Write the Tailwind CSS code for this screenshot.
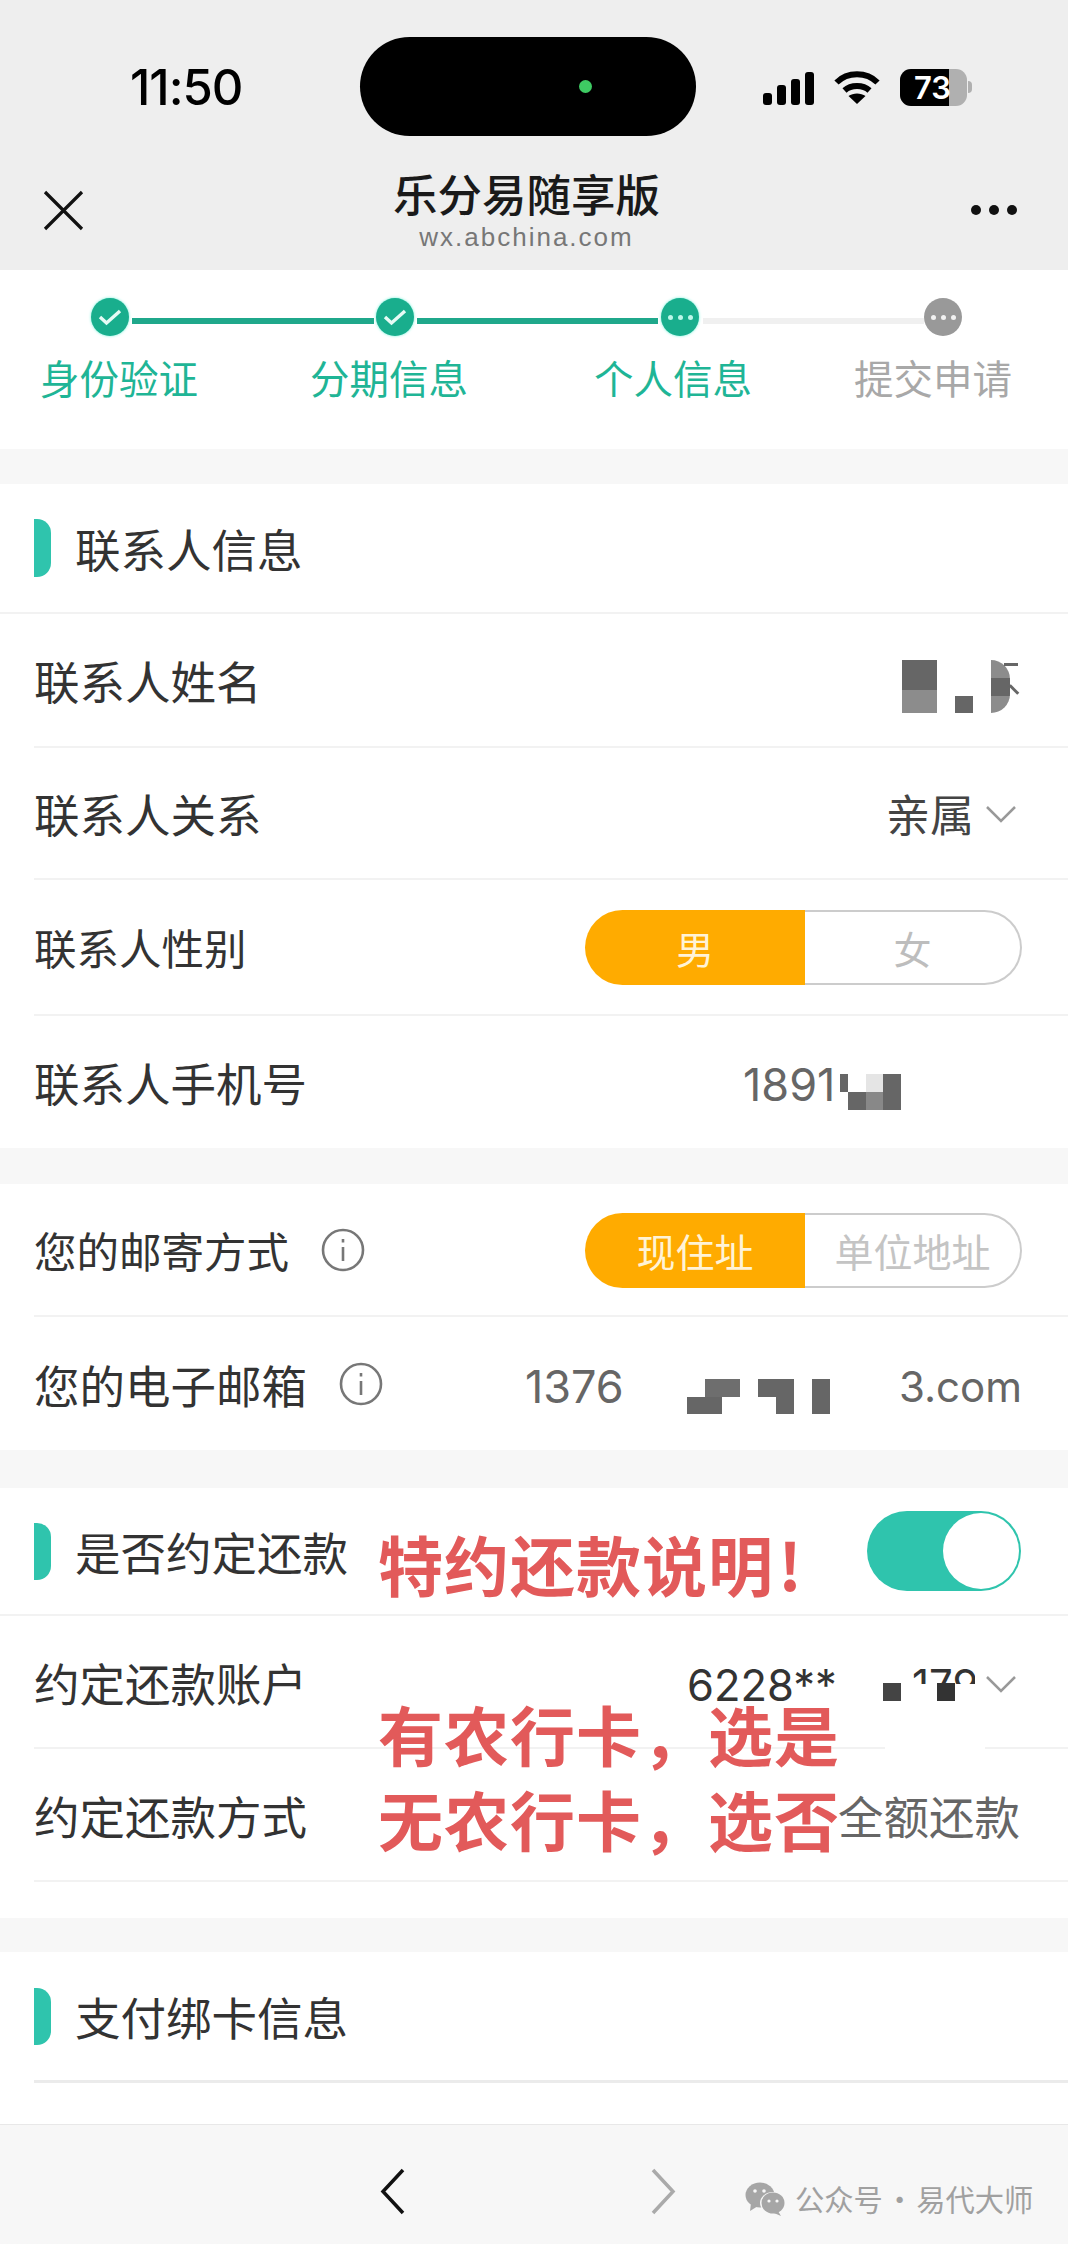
<!DOCTYPE html>
<html lang="zh-CN">
<head>
    <meta charset="UTF-8">
    <meta name="viewport" content="width=device-width, initial-scale=1.0">
    <title>乐分易随享版</title>
    <script src="https://cdn.jsdelivr.net/npm/@tailwindcss/browser@4"></script>
</head>
<body class="bg-[#f7f7f7]">
<div class="relative w-[1068px] h-[2244px] overflow-hidden bg-[#f7f7f7] text-[#333] font-['Noto_Sans_CJK_SC',sans-serif]">

    <!-- status bar + title bar -->
    <header class="h-[270px] bg-[#eeeeee] flex flex-col">
        <div class="grid grid-cols-[360px_336px_1fr] pt-[37px]">
            <div class="pl-[130px] pt-[21px] text-[49px] leading-[60px] font-medium text-black font-['Inter',sans-serif] tracking-[-1px]">11:50</div>
            <div class="h-[99px] rounded-full bg-black flex items-center pl-[219px]">
                <span class="w-[13px] h-[13px] rounded-full bg-[#3ecb63]"></span>
            </div>
            <div class="flex items-center pl-[67px] pt-[1px]">
                <div class="flex items-end gap-[5px] h-[34px] mt-[2px]">
                    <span class="w-[9px] h-[12px] rounded-[3px] bg-black"></span>
                    <span class="w-[9px] h-[20px] rounded-[3px] bg-black"></span>
                    <span class="w-[9px] h-[26px] rounded-[3px] bg-black"></span>
                    <span class="w-[9px] h-[33px] rounded-[3px] bg-black"></span>
                </div>
                <svg class="ml-[20px]" width="46" height="34" viewBox="0 0 46 34" fill="none">
                    <path d="M2.5 12.5C13.5 1.5 32.5 1.5 43.5 12.5" stroke="#000" stroke-width="6"/>
                    <path d="M10.5 20.5C17 14.5 29 14.5 35.5 20.5" stroke="#000" stroke-width="6"/>
                    <path d="M23 34L14.5 26C19 22.5 27 22.5 31.5 26Z" fill="#000"/>
                </svg>
                <div class="ml-[20px] relative w-[67px] h-[37px] rounded-[11px] overflow-hidden bg-[#b0b0b0] shrink-0">
                    <div class="w-[49px] h-full bg-black"></div>
                    <span class="absolute left-[14px] top-0 text-[31px] leading-[37px] font-semibold text-white font-['Inter',sans-serif]">73</span>
                </div>
                <span class="ml-[1px] w-[4px] h-[12px] rounded-r-full bg-[#b0b0b0]"></span>
            </div>
        </div>
        <div class="flex items-start pt-[31px]">
            <svg class="ml-[43px] mt-[23px]" width="41" height="41" viewBox="0 0 41 41" fill="none" stroke="#111" stroke-width="3.2">
                <path d="M2 2L39 39M39 2L2 39"/>
            </svg>
            <div class="flex-1 flex flex-col items-center ml-[-2px]">
                <div class="text-[44.5px] leading-[52px] font-medium text-[#1a1a1a]">乐分易随享版</div>
                <div class="mt-[3px] text-[26px] leading-[30px] tracking-[2px] text-[#777] font-['Liberation_Sans',sans-serif]">wx.abchina.com</div>
            </div>
            <div class="flex gap-[8px] mr-[51px] mt-[38px]">
                <span class="w-[10px] h-[10px] rounded-full bg-[#111]"></span>
                <span class="w-[10px] h-[10px] rounded-full bg-[#111]"></span>
                <span class="w-[10px] h-[10px] rounded-full bg-[#111]"></span>
            </div>
        </div>
    </header>

    <!-- steps -->
    <section class="h-[179px] bg-white">
        <div class="flex items-center pl-[91px] pt-[28px]">
            <span class="w-[38px] h-[38px] rounded-full bg-[#19ae8d] shadow-[0_0_3px_#6ff0d8] flex items-center justify-center shrink-0">
                <svg width="24" height="18" viewBox="0 0 24 18" fill="none" stroke="#e6fbf5" stroke-width="3.4"><path d="M2 9l6.5 6L22 3"/></svg>
            </span>
            <span class="ml-[3px] mt-[8px] w-[242px] h-[6px] bg-[#1fa88b]"></span>
            <span class="ml-[2px] w-[38px] h-[38px] rounded-full bg-[#19ae8d] shadow-[0_0_3px_#6ff0d8] flex items-center justify-center shrink-0">
                <svg width="24" height="18" viewBox="0 0 24 18" fill="none" stroke="#e6fbf5" stroke-width="3.4"><path d="M2 9l6.5 6L22 3"/></svg>
            </span>
            <span class="ml-[3px] mt-[8px] w-[241px] h-[6px] bg-[#1fa88b]"></span>
            <span class="ml-[3px] w-[38px] h-[38px] rounded-full bg-[#19ae8d] shadow-[0_0_3px_#6ff0d8] flex items-center justify-center gap-[5px] shrink-0">
                <i class="w-[5px] h-[5px] rounded-full bg-[#bdf7ea]"></i><i class="w-[5px] h-[5px] rounded-full bg-[#bdf7ea]"></i><i class="w-[5px] h-[5px] rounded-full bg-[#bdf7ea]"></i>
            </span>
            <span class="ml-[4px] mt-[8px] w-[221px] h-[6px] bg-[#f0f0f0]"></span>
            <span class="w-[38px] h-[38px] rounded-full bg-[#999999] flex items-center justify-center gap-[5px] shrink-0">
                <i class="w-[5px] h-[5px] rounded-full bg-[#f2f2f2]"></i><i class="w-[5px] h-[5px] rounded-full bg-[#f2f2f2]"></i><i class="w-[5px] h-[5px] rounded-full bg-[#f2f2f2]"></i>
            </span>
        </div>
        <div class="flex pl-[40px] pt-[16px] text-[39.5px] leading-[50px] text-[#1fb596]">
            <span class="w-[160px]">身份验证</span>
            <span class="ml-[110px] w-[160px]">分期信息</span>
            <span class="ml-[124px] w-[160px]">个人信息</span>
            <span class="ml-[100px] w-[160px] text-[#a8a8a8]">提交申请</span>
        </div>
    </section>

    <!-- 联系人信息 -->
    <section class="mt-[35px] bg-white text-[45.5px] leading-[60px]">
        <div class="h-[130px] border-b-2 border-[#f2f2f2] flex items-center pl-[34px]">
            <span class="w-[17px] h-[58px] rounded-r-[14px] bg-[#2fc4ad]"></span>
            <span class="ml-[24px]">联系人信息</span>
        </div>
        <div class="ml-[34px] h-[134px] border-b-2 border-[#f2f2f2] flex items-center justify-between">
            <span>联系人姓名</span>
            <div class="relative w-[110px] h-[53px] mr-[56px] mt-[13px]">
                <span class="absolute left-0 top-0 w-[35px] h-[30px] bg-[#666]"></span>
                <span class="absolute left-0 top-[30px] w-[35px] h-[23px] bg-[#8c8c8c]"></span>
                <span class="absolute left-[53px] top-[36px] w-[18px] h-[17px] bg-[#666]"></span>
                <div class="absolute left-[89px] top-0 w-[19px] h-[53px] rounded-r-full overflow-hidden bg-[#8c8c8c]">
                    <div class="mt-[18px] h-[18px] bg-[#666]"></div>
                </div>
                <span class="absolute left-[102px] top-[3px] w-[14px] h-[3px] bg-[#666]"></span>
                <span class="absolute left-[106px] top-[28px] w-[12px] h-[3px] rotate-45 bg-[#666]"></span>
            </div>
        </div>
        <div class="ml-[34px] h-[132px] border-b-2 border-[#f2f2f2] flex items-center justify-between">
            <span>联系人关系</span>
            <div class="flex items-center pr-[52px] text-[#444] text-[44px]">
                <span>亲属</span>
                <svg class="ml-[12px] mt-[3px]" width="30" height="17" viewBox="0 0 30 17" fill="none" stroke="#999" stroke-width="2.5"><path d="M1 1L15 15L29 1"/></svg>
            </div>
        </div>
        <div class="ml-[34px] h-[136px] border-b-2 border-[#f2f2f2] flex items-center justify-between">
            <span class="text-[42.5px]">联系人性别</span>
            <div class="flex w-[437px] h-[75px] mr-[46px] mt-[1px] text-[38px] leading-none">
                <span class="w-[220px] rounded-l-full bg-[#ffab00] text-[#fff3d6] flex items-center justify-center">男</span>
                <span class="flex-1 rounded-r-full border-2 border-l-0 border-[#cccccc] text-[#bdbdbd] flex items-center justify-center">女</span>
            </div>
        </div>
        <div class="ml-[34px] h-[132px] flex items-center justify-between">
            <span>联系人手机号</span>
            <div class="relative w-[158px] h-[60px] mr-[167px] mt-[6px] text-[45px] leading-[60px] text-[#666] font-['Inter',sans-serif]">
                1891
                <span class="absolute left-[97px] top-[19px] w-[8px] h-[18px] bg-[#666]"></span>
                <span class="absolute left-[105px] top-[37px] w-[18px] h-[18px] bg-[#666]"></span>
                <span class="absolute left-[123px] top-[19px] w-[17px] h-[18px] bg-[#e5e5e5]"></span>
                <span class="absolute left-[123px] top-[37px] w-[17px] h-[18px] bg-[#888]"></span>
                <span class="absolute left-[140px] top-[19px] w-[18px] h-[36px] bg-[#666]"></span>
            </div>
        </div>
    </section>

    <!-- 邮寄方式 / 邮箱 -->
    <section class="mt-[36px] bg-white text-[45.5px] leading-[60px]">
        <div class="ml-[34px] h-[133px] border-b-2 border-[#f2f2f2] flex items-center">
            <span class="text-[42.5px]">您的邮寄方式</span>
            <svg class="ml-[32px]" width="44" height="44" viewBox="0 0 44 44" fill="none" stroke="#777" stroke-width="2.6">
                <circle cx="22" cy="22" r="20"/><path d="M22 19V33"/><path d="M22 11V14.5"/>
            </svg>
            <div class="flex ml-auto w-[437px] h-[75px] mr-[46px] mt-[1px] text-[39px] leading-none">
                <span class="w-[220px] rounded-l-full bg-[#ffab00] text-[#fff3d6] flex items-center justify-center">现住址</span>
                <span class="flex-1 rounded-r-full border-2 border-l-0 border-[#cccccc] text-[#c4c4c4] flex items-center justify-center whitespace-nowrap">单位地址</span>
            </div>
        </div>
        <div class="ml-[34px] h-[133px] flex items-center">
            <span>您的电子邮箱</span>
            <svg class="ml-[32px]" width="44" height="44" viewBox="0 0 44 44" fill="none" stroke="#777" stroke-width="2.6">
                <circle cx="22" cy="22" r="20"/><path d="M22 19V33"/><path d="M22 11V14.5"/>
            </svg>
            <div class="relative ml-auto mr-[46px] mt-[6px] w-[497px] flex justify-between text-[42px] text-[#666] font-['Inter',sans-serif]">
                <span class="text-[45px]">1376</span><span>3.com</span>
                <span class="absolute left-[162px] top-[40px] w-[35px] h-[17px] bg-[#666]"></span>
                <span class="absolute left-[180px] top-[22px] w-[35px] h-[18px] bg-[#6e6e6e]"></span>
                <span class="absolute left-[233px] top-[22px] w-[36px] h-[18px] bg-[#666]"></span>
                <span class="absolute left-[251px] top-[40px] w-[18px] h-[17px] bg-[#666]"></span>
                <span class="absolute left-[287px] top-[22px] w-[18px] h-[35px] bg-[#666]"></span>
            </div>
        </div>
    </section>

    <!-- 约定还款 -->
    <section class="mt-[38px] bg-white text-[45.5px] leading-[60px] h-[430px]">
        <div class="h-[128px] border-b-2 border-[#f2f2f2] flex items-center pl-[34px]">
            <span class="w-[17px] h-[57px] rounded-r-[14px] bg-[#2fc4ad]"></span>
            <span class="ml-[24px] text-[#333]">是否约定还款</span>
            <div class="ml-auto mr-[47px] mt-[-1px] w-[154px] h-[80px] rounded-full bg-[#2fc4ad] flex justify-end items-center pr-[2px]">
                <span class="w-[76px] h-[76px] rounded-full bg-white"></span>
            </div>
        </div>
        <div class="ml-[34px] h-[133px] border-b-2 border-[#f2f2f2] flex items-center">
            <span>约定还款账户</span>
            <div class="relative ml-auto mr-[52px] mt-[6px] w-[329px] flex items-center justify-between text-[#333] text-[43.5px] font-['Inter',sans-serif]">
                <span>6228**</span>
                <div class="absolute left-[225px] top-0 w-[63px] h-[29px] overflow-hidden text-[42px] whitespace-nowrap">179</div>
                <span class="absolute left-[196px] top-[28px] w-[18px] h-[18px] bg-[#444]"></span>
                <span class="absolute left-[250px] top-[28px] w-[18px] h-[18px] bg-[#333]"></span>
                <svg width="30" height="17" viewBox="0 0 30 17" fill="none" stroke="#999" stroke-width="2.5"><path d="M1 1L15 15L29 1"/></svg>
            </div>
        </div>
        <div class="ml-[34px] h-[133px] border-b-2 border-[#f2f2f2] flex items-center justify-between">
            <span>约定还款方式</span>
            <span class="mr-[48px] text-[#666]">全额还款</span>
        </div>
    </section>

    <!-- 支付绑卡信息 -->
    <section class="mt-[34px] h-[172px] bg-white text-[45.5px] leading-[60px]">
        <div class="ml-[34px] h-[131px] border-b-[3px] border-[#ebebeb] flex items-center">
            <span class="w-[17px] h-[57px] rounded-r-[14px] bg-[#2fc4ad]"></span>
            <span class="ml-[24px]">支付绑卡信息</span>
        </div>
    </section>

    <!-- bottom bar -->
    <footer class="h-[120px] border-t border-[#e8e8e8] flex items-start pt-[43px]">
        <svg class="ml-[380px]" width="25" height="47" viewBox="0 0 25 47" fill="none" stroke="#111" stroke-width="3.5"><path d="M23 2L3 23.5L23 45"/></svg>
        <svg class="ml-[246px]" width="25" height="47" viewBox="0 0 25 47" fill="none" stroke="#aaa" stroke-width="3.5"><path d="M2 2L22 23.5L2 45"/></svg>
        <svg class="ml-[69px] mt-[14px]" width="41" height="34" viewBox="0 0 41 34">
            <ellipse cx="15" cy="13" rx="14.5" ry="12.5" fill="#a6a6a6"/>
            <path d="M6 21L5 29L13 24Z" fill="#a6a6a6"/>
            <ellipse cx="28" cy="21" rx="13" ry="11" fill="#f7f7f7"/>
            <ellipse cx="28" cy="21" rx="11.5" ry="10.5" fill="#a6a6a6"/>
            <path d="M33 29L36 34L29 31Z" fill="#a6a6a6"/>
            <circle cx="10" cy="9" r="1.8" fill="#f7f7f7"/><circle cx="19" cy="9" r="1.8" fill="#f7f7f7"/>
            <circle cx="24" cy="19" r="1.6" fill="#f7f7f7"/><circle cx="32" cy="19" r="1.6" fill="#f7f7f7"/>
        </svg>
        <span class="ml-[9px] mt-[11px] text-[29.3px] leading-[38px] text-[#a0a0a0] whitespace-nowrap">公众号<span class="mx-[2px]">·</span>易代大师</span>
    </footer>

    <!-- 图片上的红字标注 -->
    <div class="absolute left-[885px] top-[1745px] w-[100px] h-[6px] bg-white"></div>
    <div class="absolute left-[378px] top-[1523px] text-[65px] leading-[80px] font-bold tracking-[1px] text-[#e25a5a] whitespace-nowrap">特约还款说明<span class="ml-[4px]">!</span></div>
    <div class="absolute left-[378px] top-[1693px] text-[65px] leading-[80px] font-bold tracking-[1px] text-[#e25a5a] whitespace-nowrap">有农行卡&#xFF0C;选是</div>
    <div class="absolute left-[378px] top-[1778px] text-[65px] leading-[80px] font-bold tracking-[1px] text-[#e25a5a] whitespace-nowrap">无农行卡&#xFF0C;选否</div>
</div>
</body>
</html>
